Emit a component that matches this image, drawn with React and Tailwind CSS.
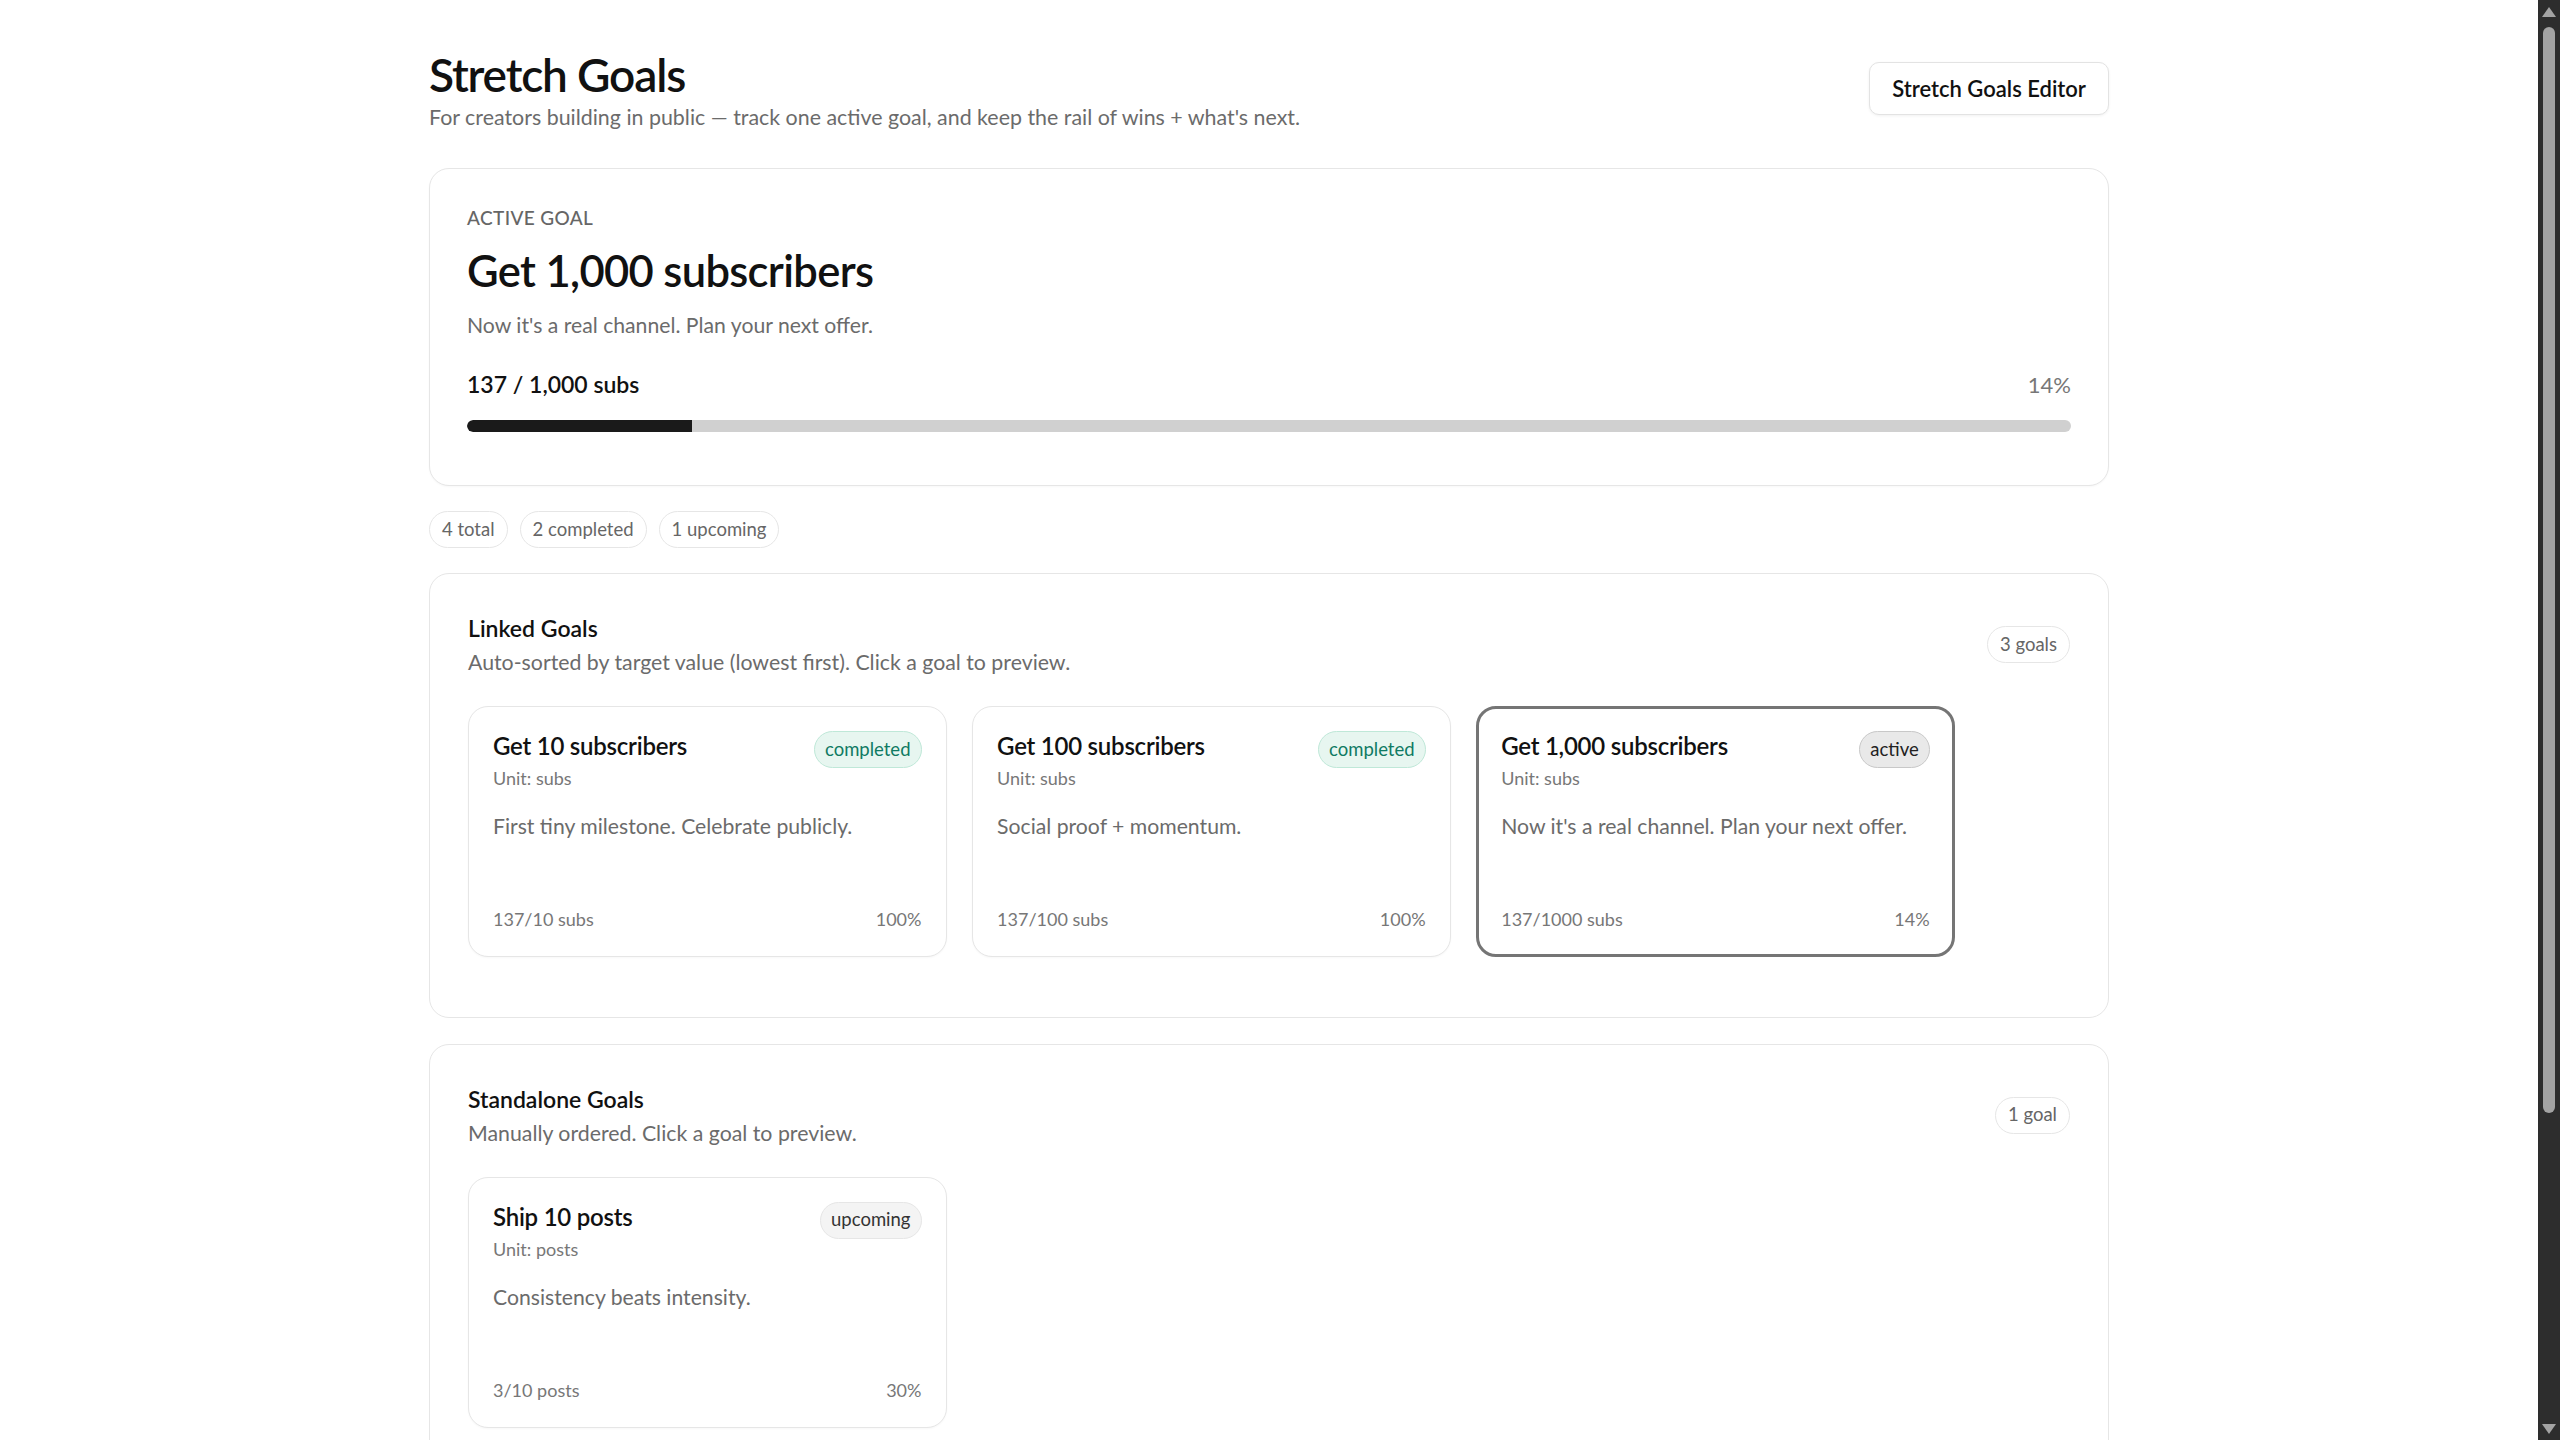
const linkedGoals = [
  { id: 1, title: "Get 10 subscribers", unit: "subs", note: "First tiny milestone. Celebrate publicly.", current: 137, target: 10, status: "completed" },
  { id: 2, title: "Get 100 subscribers", unit: "subs", note: "Social proof + momentum.", current: 137, target: 100, status: "completed" },
  { id: 3, title: "Get 1,000 subscribers", unit: "subs", note: "Now it's a real channel. Plan your next offer.", current: 137, target: 1000, status: "active" },
];

const standaloneGoals = [
  { id: 4, title: "Ship 10 posts", unit: "posts", note: "Consistency beats intensity.", current: 3, target: 10, status: "upcoming" },
];

const pct = (g) => Math.min(100, Math.round((g.current / g.target) * 100));

const badgeStyles = {
  completed: "bg-[#e7f6f0] border-[#bfe8d8] text-[#0f7a63]",
  active: "bg-[#e9e9e9] border-[#c8c8c8] text-[#222]",
  upcoming: "bg-[#f4f4f4] border-[#e6e6e6] text-[#333]",
};

function Pill({ children }) {
  return (
    <span className="h-[37px] px-[12px] flex items-center rounded-full border border-[#e6e6e6] bg-white text-[18.5px] text-[#666]">
      {children}
    </span>
  );
}

function GoalCard({ goal }) {
  const isActive = goal.status === "active";
  return (
    <div
      className={`w-[478.5px] h-[251px] flex flex-col rounded-[20px] bg-white cursor-pointer ${
        isActive ? "border-[3px] border-[#757575] px-[22px] pt-[21px] pb-[23px]" : "border border-[#e6e6e6] px-[24px] pt-[23px] pb-[25px] shadow-[0_1px_2px_rgba(0,0,0,0.03)]"
      }`}
    >
      <div className="flex items-start justify-between">
        <div>
          <p className="text-[24px] leading-[32px] font-semibold tracking-[-0.01em] text-[#111]">{goal.title}</p>
          <p className="mt-[4px] text-[18px] leading-[24px] text-[#777]">Unit: {goal.unit}</p>
        </div>
        <span className={`mt-[1px] h-[37px] px-[10px] flex items-center rounded-full border text-[18.5px] ${badgeStyles[goal.status]}`}>
          {goal.status}
        </span>
      </div>
      <p className="mt-[21px] text-[21.2px] leading-[30px] text-[#6b6b6b]">{goal.note}</p>
      <div className="mt-auto flex items-center justify-between text-[18px] leading-[24px] text-[#777]">
        <span>{goal.current}/{goal.target} {goal.unit}</span>
        <span>{pct(goal)}%</span>
      </div>
    </div>
  );
}

function GoalSection({ title, subtitle, goals, countLabel }) {
  return (
    <section className="rounded-[20px] border border-[#e6e6e6] bg-white px-[38px] pt-[38px] pb-[60px]">
      <div className="flex items-center justify-between">
        <div>
          <h2 className="text-[23px] leading-[32px] font-semibold text-[#111]">{title}</h2>
          <p className="mt-[3px] text-[21.3px] leading-[30px] text-[#6b6b6b]">{subtitle}</p>
        </div>
        <Pill>{countLabel}</Pill>
      </div>
      <div className="mt-[29px] flex flex-wrap gap-[25.6px]">
        {goals.map((g) => (
          <GoalCard key={g.id} goal={g} />
        ))}
      </div>
    </section>
  );
}

// the window's own scrollbar, as it shows in the screenshot
function ScrollRail() {
  return (
    <aside className="fixed top-0 right-0 h-screen w-[22px] bg-[#2d2d2d] flex flex-col items-center">
      <span className="mt-[7px] w-0 h-0 border-x-[7px] border-x-transparent border-b-[10px] border-b-[#a3a3a3]" />
      <span className="mt-[10px] w-[12px] h-[1086px] rounded-full bg-[#a3a3a3]" />
      <span className="mt-auto mb-[6px] w-0 h-0 border-x-[7px] border-x-transparent border-t-[10px] border-t-[#a3a3a3]" />
    </aside>
  );
}

export default function App() {
  const active = linkedGoals[2];
  const activePct = pct(active);

  return (
    <div className="min-h-screen bg-white pr-[22px] text-[#111] font-['Lato','Noto_Sans',sans-serif]">
      <div className="mx-auto max-w-[1680px] pt-[46px] pb-[360px]">
        {/* header */}
        <header className="flex items-center justify-between">
          <div>
            <h1 className="text-[46px] leading-[58px] font-semibold tracking-[-0.025em]">Stretch Goals</h1>
            <p className="text-[21.4px] leading-[27px] text-[#6b6b6b]">
              For creators building in public — track one active goal, and keep the rail of wins + what's next.
            </p>
          </div>
          <button className="h-[53px] px-[22px] rounded-[10px] border border-[#e3e3e3] bg-white text-[22px] font-semibold text-[#111] shadow-[0_1px_3px_rgba(0,0,0,0.06)]">
            Stretch Goals Editor
          </button>
        </header>

        {/* active goal */}
        <section className="mt-[37px] rounded-[20px] border border-[#e6e6e6] bg-white px-[37px] pt-[39px] pb-[53px] shadow-[0_1px_2px_rgba(0,0,0,0.03)]">
          <p className="text-[19px] leading-[20px] font-medium uppercase tracking-[0.02em] text-[#666]">Active goal</p>
          <h2 className="mt-[16px] text-[43.5px] leading-[53px] font-semibold tracking-[-0.015em]">{active.title}</h2>
          <p className="mt-[13px] text-[21.2px] leading-[30px] text-[#6b6b6b]">{active.note}</p>
          <div className="mt-[28px] flex items-baseline justify-between">
            <span className="text-[23px] leading-[32px] font-semibold">137 / 1,000 subs</span>
            <span className="text-[22px] leading-[32px] text-[#777]">{activePct}%</span>
          </div>
          <div className="mt-[19px] h-[12px] w-full rounded-full bg-[#d0d0d0] overflow-hidden">
            <div className="h-full rounded-l-full bg-[#1a1a1a]" style={{ width: `${activePct}%` }} />
          </div>
        </section>

        {/* counts */}
        <div className="mt-[25px] flex gap-[12px]">
          <Pill>4 total</Pill>
          <Pill>2 completed</Pill>
          <Pill>1 upcoming</Pill>
        </div>

        <div className="mt-[25px] flex flex-col gap-[25.6px]">
          <GoalSection
            title="Linked Goals"
            subtitle="Auto-sorted by target value (lowest first). Click a goal to preview."
            goals={linkedGoals}
            countLabel="3 goals"
          />
          <GoalSection
            title="Standalone Goals"
            subtitle="Manually ordered. Click a goal to preview."
            goals={standaloneGoals}
            countLabel="1 goal"
          />
        </div>
      </div>
      <ScrollRail />
    </div>
  );
}
